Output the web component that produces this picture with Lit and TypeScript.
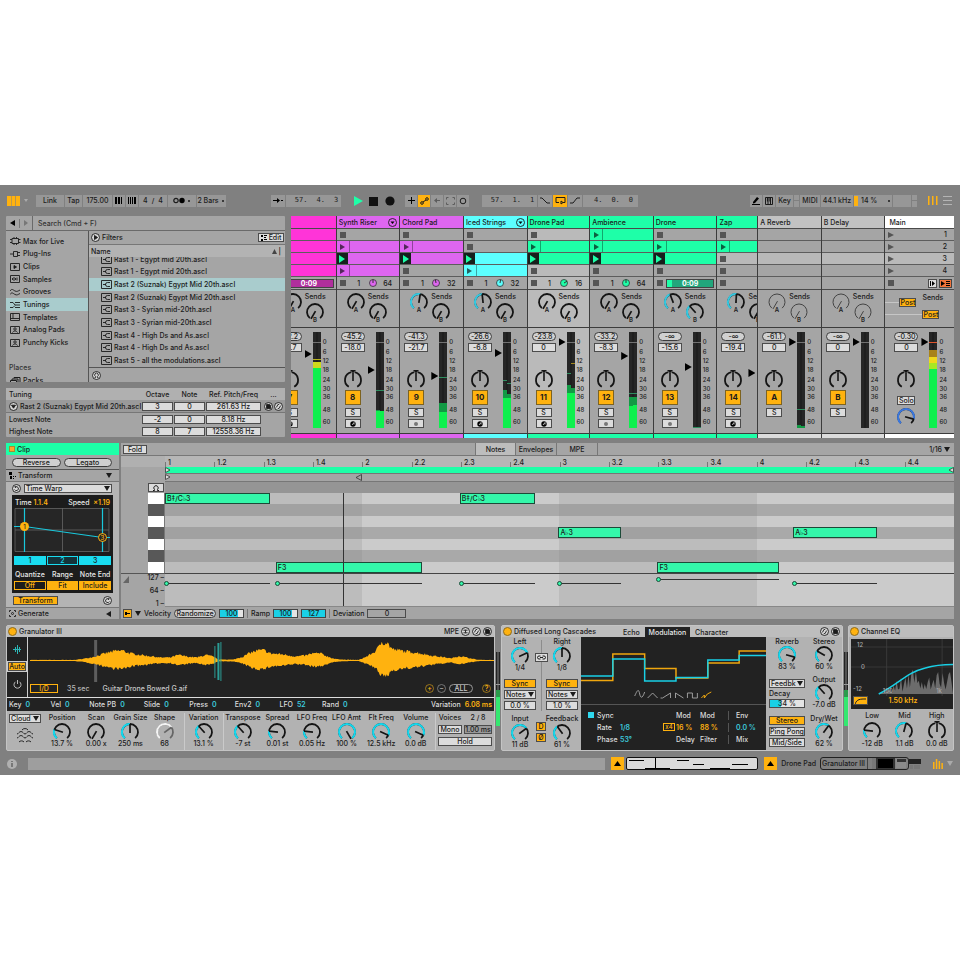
import { LitElement, html, svg, css, nothing } from "lit";
import { customElement } from "lit/decorators.js";
import { classMap } from "lit/directives/class-map.js";
import { styleMap } from "lit/directives/style-map.js";

/* ---------- shared styles ---------- */
const base = css`
  :host {
    --ink: #1b1b1b;
    --panel: #a5a5a5;
    --light: #b9b9b9;
    --desk: #808080;
    --line: #4e4e4e;
    --amber: #ffb20f;
    --cyan: #14d8ee;
    --mint: #1effa8;
    --field: #dcdcdc;
    display: block;
    min-width: 0;
    font: 500 7px/9px Inter, "Liberation Sans", sans-serif;
    color: var(--ink);
  }
  *, *::before { box-sizing: border-box; }
  svg { display: block; flex: none; }
  button, input, select {
    font: inherit;
    color: inherit;
    margin: 0;
    padding: 0;
    border: 0;
    border-radius: 0;
    background: none;
    appearance: none;
    min-width: 0;
    line-height: inherit;
  }
  button { display: flex; align-items: center; justify-content: center; white-space: nowrap; }
  ul, h2, p { margin: 0; padding: 0; list-style: none; font: inherit; }
  a { color: inherit; text-decoration: none; }
  .row { display: flex; align-items: center; }
  .grow { flex: 1; }
  .btn { height: 9px; border: 1px solid #4c4c4c; background: var(--field); }
  .pill { height: 9px; border: 1px solid #3c3c3c; border-radius: 5px; background: #d0d0d0; }
  .on { background: var(--amber); }
  .field { height: 9px; border: 1px solid #4c4c4c; background: var(--field); text-align: center; width: 100%; }
  .pick { display: flex; align-items: center; height: 9px; border: 1px solid #4c4c4c; background: var(--field); }
  .pick select { flex: 1; height: 7px; line-height: 7px; padding-left: 1px; }
  .pick svg { margin-right: 1px; }
  .knob { position: relative; display: flex; flex-direction: column; align-items: center; white-space: nowrap; }
  .knob input { position: absolute; inset: 0; width: 100%; height: 100%; opacity: 0; }
  .caption { line-height: 10px; }
`;

/* ---------- drawing helpers ---------- */
const polar = (c: number, r: number, deg: number) => {
  const a = (deg * Math.PI) / 180;
  return `${(c + r * Math.sin(a)).toFixed(2)} ${(c - r * Math.cos(a)).toFixed(2)}`;
};
const arc = (c: number, r: number, a: number, b: number) =>
  `M${polar(c, r, a)}A${r} ${r} 0 ${b - a > 180 ? 1 : 0} 1 ${polar(c, r, b)}`;

interface DialOpts { ring?: string; base?: string; thin?: boolean; pan?: boolean; letter?: string; rest?: string }

const dial = (value: number, o: DialOpts = {}) => {
  const angle = -150 + value * 300;
  const base = o.base ?? "#141414";
  const rest = o.rest ?? base;
  const w = o.thin ? 1 : 1.8;
  const edge = Math.max(-139, Math.min(139, angle));
  return html`<svg width="20" height="20" viewBox="0 0 20 20" fill="none">
    ${o.pan
      ? svg`<path d="${arc(10, 8, -148, -12)}${arc(10, 8, 12, 148)}" stroke=${base} stroke-width="1.8"/>
          <path d="M7 0h6l-3 3.2z" fill=${base}/><path d="M10 3v8" stroke=${base} stroke-width="1.6"/>`
      : svg`<path d=${arc(10, 8, -140, 140)} stroke=${rest} stroke-width=${w}/>
          ${o.ring && edge > -138 ? svg`<path d=${arc(10, 8, -140, edge)} stroke=${o.ring} stroke-width="2"/>` : nothing}
          <path d="M${polar(10, 1, angle + 180)}L${polar(10, 8, angle)}" stroke=${base} stroke-width=${o.thin ? 1 : 1.7}/>`}
    ${o.letter ? svg`<text x="10" y="19.6" text-anchor="middle" font-size="6" font-weight="600" fill="#1b1b1b">${o.letter}</text>` : nothing}
  </svg>`;
};

const knob = (label: string, value: number, text: string, o: DialOpts = {}) => html`
  <label class="knob">
    <span class="caption">${label}</span>
    <input type="range" min="0" max="100" .value=${String(value * 100)} aria-label=${label} />
    ${dial(value, { ring: "#14d8ee", ...o })}
    <span class="reading">${text}</span>
  </label>`;

const down = (fill = "#1b1b1b") => html`<svg width="6" height="5" viewBox="0 0 6 5"><path d="M0 0h6L3 5z" fill=${fill} /></svg>`;
const left = () => html`<svg width="5" height="6" viewBox="0 0 5 6"><path d="M5 0v6L0 3z" fill="#1b1b1b" /></svg>`;
const pick = (name: string, value: string) => html`
  <span class="pick"><select aria-label=${name}><option>${value}</option></select>${down()}</span>`;
const ringIcon = (inner: unknown, size = 9) => html`
  <svg width=${size} height=${size} viewBox="0 0 9 9" fill="none" stroke="#1b1b1b" stroke-width=".9">
    <circle cx="4.5" cy="4.5" r="4" fill="#d6d6d6" />${inner}</svg>`;
const swap = svg`<path d="M2.4 5.4L4 2.400h1.200M6.600 3.600L5 6.600H3.800"/>`;
const save = svg`<path d="M2.600 2.400h3l1 1v3.200h-4z" fill="#1b1b1b"/>`;
const gridDots = svg`<path d="M2.400 3.200h1.600M5 3.200h1.600M2.400 5.800h1.600M5 5.800h1.600M4.500 2.500v4" />`;

/* ---------- transport ---------- */
@customElement("live-transport")
export class LiveTransport extends LitElement {
  static styles = [base, css`
    .bar { display: flex; align-items: center; height: 31px; padding: 0 8px 0 7px; }
    .group { display: flex; gap: 1px; }
    .group > * { height: 12px; background: #979797; display: flex; align-items: center; justify-content: center; }
    .group > .lit { background: var(--amber); }
    .g1 { margin-left: 8px; }
    .g2 { margin-left: 45px; }
    .g3 { margin-left: 12px; gap: 6px; }
    .g3 > * { background: none; width: 10px; }
    .g4 { margin-left: 10px; }
    .g5 { margin-left: 13px; }
    .g6 { margin-left: auto; }
    .g7 { margin-left: 11px; gap: 5px; }
    .g7 > * { background: none; }
    .w5 { width: 5px; } .w12 { width: 12px; } .w14 { width: 14px; } .w17 { width: 17px; } .w18 { width: 18px; }
    .w20 { width: 20px; } .w28 { width: 28px; } .w29 { width: 29px; } .w32 { width: 32px; } .w38 { width: 38px; } .w55 { width: 55px; }
    .pos { gap: 9px; padding-left: 6px; font-family: "DejaVu Sans Mono", monospace; }
    .sig { gap: 4px; }
    .cpu { justify-content: flex-start; gap: 3px; }
    .cpu i:first-child { width: 4px; height: 10px; background: var(--amber); }
    .cpu span { flex: 1; text-align: left; }
    .split { flex-direction: column; gap: 1px; }
    .group > .split { background: none; }
    .split i { flex: 1; width: 100%; background: #979797; }
    .caret { margin-left: 4px; }
    .dot { width: 2px; height: 2px; border-radius: 1px; background: var(--ink); margin: 0 2px 0 3px; }
  `];

  private pos(name: string, a: string, b: string, c: string) {
    return html`<button class="w55 pos" aria-label=${name}><span>${a}.</span><span>${b}.</span><span>${c}</span></button>`;
  }

  render() {
    return html`<header class="bar">
      <svg width="13" height="10" viewBox="0 0 13 10"><path d="M0 0h4.500v10H0zM5 0h3.400v10H5zM9 0h4v10H9z" fill="#ffb20f" /></svg>
      <span class="caret"><svg width="4" height="3" viewBox="0 0 4 3"><path d="M0 0h4L2 3z" fill="#aaa" /></svg></span>
      <div class="group g1">
        <button class="w28">Link</button>
        <button class="w17">Tap</button>
        <button class="w29">175.00</button>
        <button class="w12" aria-label="Nudge down"><svg width="8" height="7"><path d="M0 0h2v7H0zM3 0h2v7H3zM6 0h1v7H6z" /></svg></button>
        <button class="w12" aria-label="Nudge up"><svg width="8" height="7"><path d="M0 0h1v7H0zM2 0h1v7H2zM4 0h1v7H4zM6 0h2v7H6z" /></svg></button>
        <button class="w28 sig"><span>4</span><span>/</span><span>4</span></button>
        <button class="w28" aria-label="Metronome"><svg width="12" height="7" viewBox="0 0 12 7"><circle cx="3" cy="3.5" r="2.2" fill="none" stroke="#1b1b1b" stroke-width="1.2" /><circle cx="9" cy="3.5" r="2.7" /></svg><i class="dot"></i></button>
        <button class="w29">2 Bars<i class="dot"></i></button>
      </div>
      <div class="group g2">
        <button class="w14" aria-label="Follow"><svg width="10" height="7" viewBox="0 0 10 7"><path d="M0 3h4V1l3 2.5L4 6V4H0zM8 3h2v1H8z" /></svg></button>
        ${this.pos("Position", "57", "4", "3")}
      </div>
      <div class="group g3">
        <button aria-label="Play"><svg width="10" height="10" viewBox="0 0 10 10"><path d="M1 0l9 5-9 5z" fill="#1effa8" /></svg></button>
        <button aria-label="Stop"><svg width="10" height="10"><path d="M0 1h9v9H0z" fill="#111" /></svg></button>
        <button aria-label="Record"><svg width="10" height="10"><circle cx="5" cy="5" r="4.6" fill="#111" /></svg></button>
      </div>
      <div class="group g4">
        <button class="w12" aria-label="Overdub"><svg width="7" height="7"><path d="M3 0h1v7H3zM0 3h7v1H0z" /></svg></button>
        <button class="w12 lit" aria-label="Automation arm"><svg width="9" height="8" viewBox="0 0 9 8" fill="none" stroke="#1b1b1b"><circle cx="2" cy="6" r="1.3" /><circle cx="7" cy="2" r="1.3" /><path d="M3 5l3-2" /></svg></button>
        <button class="w12" aria-label="Re-enable automation"><svg width="7" height="7" viewBox="0 0 7 7"><path d="M6 3H3V1L0 3.5 3 6V4h3z" fill="#5c5c5c" /></svg></button>
        <button class="w12" aria-label="Capture"><svg width="9" height="8" viewBox="0 0 9 8" fill="none" stroke="#5c5c5c"><path d="M.5 2.5v-2h2M6.500.5h2v2M8.500 5.500v2h-2M2.500 7.500h-2v-2" /></svg></button>
        <button class="w12" aria-label="Session record"><svg width="8" height="8"><circle cx="4" cy="4" r="2.8" fill="none" stroke="#1b1b1b" /></svg></button>
      </div>
      <div class="group g5">
        ${this.pos("Loop start", "57", "1", "1")}
        <button class="w14" aria-label="Punch in"><svg width="10" height="7" viewBox="0 0 10 7" fill="none" stroke="#1b1b1b"><path d="M0 1h2l5 5h3" /></svg></button>
        <button class="w14 lit" aria-label="Loop"><svg width="11" height="9" viewBox="0 0 11 9" fill="none" stroke="#1b1b1b"><path d="M4 6.500H1v-5h9v5H8M6 8l2-1.500L6 5z" /></svg></button>
        <button class="w14" aria-label="Punch out"><svg width="10" height="7" viewBox="0 0 10 7" fill="none" stroke="#1b1b1b"><path d="M0 6h3l4-5h3" /></svg></button>
        ${this.pos("Loop length", "4", "0", "0")}
      </div>
      <div class="group g6">
        <button class="w12" aria-label="Draw"><svg width="8" height="8" viewBox="0 0 8 8"><path d="M1 5l4-5 2 1.500-4 4.500L1 6.500zM0 7h8v1H0z" /></svg></button>
        <button class="w12" aria-label="Computer keyboard"><svg width="8" height="8" viewBox="0 0 8 8" fill="none" stroke="#1b1b1b"><path d="M.5.5h7v7h-7zM3 .5v7M5.500.5v7" /><path d="M2.500 1v3.500M5 1v3.500" stroke-width="1.200" /></svg></button>
        <button class="w17">Key</button>
        <span class="w5 split"><i></i><i></i></span>
        <button class="w20">MIDI</button>
        <button class="w32">44.1 kHz</button>
        <button class="w38 cpu"><i></i><span>14 %</span><i class="dot"></i></button>
        <span class="w18"></span>
        <span class="w5 split"><i></i><i></i></span>
      </div>
      <div class="group g7">
        <button aria-label="Arrangement view"><svg width="10" height="9"><path d="M0 0h1.500v9H0zM4 0h1.500v9H4zM8 0h1.500v9H8z" fill="#ffb20f" /></svg></button>
        <button aria-label="Menu"><svg width="9" height="9"><path d="M0 0h9v1H0zM0 4h9v1H0zM0 8h9v1H0z" fill="#b4b4b4" /></svg></button>
      </div>
    </header>`;
  }
}

/* ---------- browser ---------- */
const CATEGORIES: [string, unknown][] = [
  ["Max for Live", svg`<path d="M0 2.500h2M8.500 2.500h2M0 5.500h2M8.500 5.500h2M2 1.500h6.500v5H2zM4 1.500V0M6.500 1.500V0M4 8V6.500M6.500 8V6.500"/>`],
  ["Plug-Ins", svg`<path d="M0 4h3M3.500 1.500h4v5h-4zM7.500 2.500H10M7.500 5.500H10"/>`],
  ["Clips", svg`<path d="M.5.5h9v7h-9z"/><path d="M4 2.500v3L6.500 4z" fill="#1b1b1b"/>`],
  ["Samples", svg`<path d="M.5.5h9v7h-9zM2.500 3v2M4 2v4M5.500 3v2M7 2.500v3"/>`],
  ["Grooves", svg`<path d="M0 3c2-3 3-1 5 0s3 0 5-1M0 6.500c2-3 3-1 5 0s3 0 5-1"/>`],
  ["Tunings", svg`<path d="M0 1.500h3l2 2.500h5M5 1.500h5M0 6.500h3l2-2M5 6.500h5"/>`],
  ["Templates", svg`<path d="M.5.5h9v7h-9zM3 .5v5M.5 5.500h9"/>`],
  ["Analog Pads", svg`<path d="M.5.5h9v7h-9z"/><circle cx="5" cy="3" r="1.200"/><path d="M2.500 6.500c1-2 4-2 5 0"/>`],
  ["Punchy Kicks", svg`<path d="M.5.5h9v7h-9z"/><circle cx="5" cy="3" r="1.200"/><path d="M2.500 6.500c1-2 4-2 5 0"/>`],
];
const FILES = [
  "Rast 1 - Egypt mid 20th.ascl", "Rast 1 - Egypt mid 20th.ascl", "Rast 2 (Suznak) Egypt Mid 20th.ascl",
  "Rast 2 (Suznak) Egypt Mid 20th.ascl", "Rast 3 - Syrian mid-20th.ascl", "Rast 3 - Syrian mid-20th.ascl",
  "Rast 4 - High Ds and As.ascl", "Rast 4 - High Ds and As.ascl", "Rast 5 - all the modulations.ascl",
];

@customElement("live-browser")
export class LiveBrowser extends LitElement {
  static styles = [base, css`
    :host { display: flex; flex-direction: column; gap: 6px; }
    .card { background: var(--panel); border-radius: 1px; }
    .search { display: flex; height: 15px; border-bottom: 1px solid #6a6a6a; }
    .nav { display: flex; align-items: center; gap: 4px; width: 27px; padding-left: 4px; border-right: 1px solid #6a6a6a; }
    .nav i { width: 1px; height: 9px; background: #777; }
    .search input { flex: 1; padding-left: 5px; }
    .search input::placeholder { color: #333; opacity: 1; }
    .cols { display: grid; grid-template-columns: 83px minmax(0, 1fr); grid-template-rows: 151px; }
    .side { border-right: 1px solid #555; padding-top: 4px; overflow: hidden; }
    .side ul { display: grid; grid-auto-rows: 1fr; height: 114px; }
    .side a { display: flex; align-items: center; gap: 2px; padding-left: 4px; }
    .side ul a { height: 100%; }
    .chosen { background: #a9cccd; }
    .side h2 { margin-top: 14px; padding-left: 3px; color: #333; }
    .side .pack { margin-top: 4px; }
    .list { display: flex; flex-direction: column; }
    .filters { display: flex; align-items: center; gap: 2px; height: 14px; padding: 0 1px 0 2px; border-bottom: 1px solid #777; }
    .filters .btn { width: 26px; gap: 2px; }
    .name { display: flex; align-items: center; height: 12px; padding: 0 4px 0 2px; background: #b3b3b3; gap: 2px; }
    .files { flex: 1; min-height: 0; display: flex; flex-direction: column; justify-content: flex-end; overflow: hidden; }
    .files ul { display: grid; grid-auto-rows: 1fr; height: 114px; flex: none; }
    .files a { display: flex; align-items: center; gap: 2px; height: 100%; padding-left: 12px; white-space: nowrap; }
    .foot { height: 15px; flex: none; border-top: 1px solid #555; display: flex; align-items: center; padding-left: 3px; }
    .tuning { display: grid; grid-template-columns: minmax(0, 1fr) 31px 31px 55px 23px; column-gap: 1px; align-items: center; height: 49px; grid-template-rows: 12px 13px 12px 12px; }
    .tuning > * { z-index: 1; }
    .tuning .band { grid-column: 1 / -1; grid-row: 1; align-self: stretch; background: #b0b0b0; z-index: 0; }
    .tuning .rule { grid-column: 1 / -1; grid-row: 2; align-self: stretch; background: #9a9a9a; border-bottom: 1px solid #777; z-index: 0; }
    .lab { padding-left: 3px; display: flex; align-items: center; gap: 2px; white-space: nowrap; }
    .c { text-align: center; white-space: nowrap; }
    .tools { display: flex; gap: 1px; padding-left: 2px; }
  `];

  private line(row: number, label: unknown, name: string, vals: string[]) {
    return html`<span class="lab" style=${styleMap({ gridRow: row, gridColumn: 1 })}>${label}</span>
      ${vals.map((v, i) => html`<input class="field" style=${styleMap({ gridRow: row, gridColumn: i + 2 })} .value=${v} aria-label="${name} ${i + 1}" />`)}`;
  }

  render() {
    const stroke = "#1b1b1b";
    return html`
      <section class="card">
        <div class="search">
          <div class="nav">
            <svg width="5" height="6" viewBox="0 0 5 6"><path d="M5 0v6L0 3z" /></svg><i></i>
            <svg width="4" height="6" viewBox="0 0 4 6"><path d="M0 0v6l4-3z" fill="#777" /></svg>
          </div>
          <input type="text" placeholder="Search (Cmd + F)" aria-label="Search" />
        </div>
        <div class="cols">
          <nav class="side">
            <ul>${CATEGORIES.map(([n, icon]) => html`<li class=${n === "Tunings" ? "chosen" : ""}><a href="#">
              <svg width="11" height="8" viewBox="0 0 11 8" fill="none" stroke=${stroke} stroke-width=".9">${icon}</svg>${n}</a></li>`)}</ul>
            <h2>Places</h2>
            <a class="pack" href="#"><svg width="11" height="8" viewBox="0 0 11 8" fill="none" stroke=${stroke}><path d="M.5 3.500h6v4h-6zM2 3V2h6v5M4 1.500V.5h6v5" /></svg>Packs</a>
          </nav>
          <div class="list">
            <div class="filters">${ringIcon(svg`<path d="M3.500 2.500v4l3-2z" fill="#1b1b1b"/>`)}<span class="grow">Filters</span>
              <button class="btn"><svg width="6" height="6"><path d="M0 0h2v2H0zM3 0h3v1H3zM0 4h2v2H0zM3 4h3v1H3zM3 2h2v1H3z" /></svg>Edit</button></div>
            <div class="name"><span class="grow">Name</span><svg width="5" height="5"><path d="M0 5h5L2.500 0z" fill="#444" /></svg><span>|</span></div>
            <div class="files"><ul>${FILES.map((f, i) => html`<li class=${i === 2 ? "chosen" : ""}><a href="#">
              <svg width="11" height="9" viewBox="0 0 11 9" fill="none" stroke=${stroke} stroke-width=".9"><path d="M.5.5h10v8H.5zM2 4.500h3M9 2.500H6.500a2 2 0 0 0 0 4H9" /></svg>${f}</a></li>`)}</ul></div>
            <div class="foot">${ringIcon(svg`<path d="M2.600 6.500h1V5.500a1.800 1.800 0 1 1 1.800 0v1h1"/>`)}</div>
          </div>
        </div>
      </section>
      <section class="card tuning">
        <span class="band"></span><span class="rule"></span>
        <span class="lab" style=${styleMap({ gridRow: 1, gridColumn: 1 })}>Tuning</span>
        ${["Octave", "Note", "Ref. Pitch/Freq", "..."].map((t, i) => html`<span class="c" style=${styleMap({ gridRow: 1, gridColumn: i + 2 })}>${t}</span>`)}
        ${this.line(2, html`${ringIcon(svg`<path d="M2.500 3.200h4l-2 3z" fill="#1b1b1b"/>`)}Rast 2 (Suznak) Egypt Mid 20th.ascl`, "Reference", ["3", "0", "261.63 Hz"])}
        <span class="tools" style=${styleMap({ gridRow: 2, gridColumn: 5 })}>${ringIcon(save)}${ringIcon(swap)}</span>
        ${this.line(3, "Lowest Note", "Lowest note", ["-2", "0", "8.18 Hz"])}
        ${this.line(4, "Highest Note", "Highest note", ["8", "7", "12558.36 Hz"])}
      </section>`;
  }
}

/* ---------- session ---------- */
type Slot = "fill" | "stop" | "clip" | "play" | "none";
type Seg = [number, number, string, number?];
interface Track {
  name: string; color: string; slots: Slot[]; menu?: boolean; selected?: boolean; edge?: "start" | "end";
  loop?: [string, string, number]; progress?: number; stop?: boolean;
  sends: [number, number, boolean, boolean]; faint?: boolean;
  peak: string; vol: string; fader: number; id: string; arm?: "note" | "audio"; meter: Seg[];
}
const PURPLE = "#de66f0", MINT = "#1effa8", AQUA = "#5cffff", GREEN = "#0ef04e", DEEP = "#129a44";
const TRACKS: Track[] = [
  { name: "", color: "#ff34d8", slots: ["fill", "fill", "fill", "fill"], edge: "start", progress: 0, sends: [0, 0, false, false], peak: "-12.2", vol: "-3.7", fader: 22, id: "7", arm: "note",
    meter: [[27, 1, "#b7b21c"], [30, 6, "#cfd91c"], [36, 60, GREEN]] },
  { name: "Synth Riser", color: PURPLE, menu: true, slots: ["stop", "clip", "play", "clip"], loop: ["1", "64", 0], stop: true, sends: [0, 0, false, false], peak: "-45.2", vol: "-18.0", fader: 38, id: "8", arm: "note",
    meter: [[58, 1, "#2f8f60"], [78, 3, DEEP, 1], [79, 17, GREEN]] },
  { name: "Chord Pad", color: PURPLE, slots: ["stop", "clip", "play", "stop"], loop: ["1", "32", 350], stop: true, sends: [0.53, 0, true, false], peak: "-41.3", vol: "-21.7", fader: 44, id: "9", arm: "audio",
    meter: [[45, 1, "#2f8f60"], [71, 9, DEEP], [80, 16, GREEN]] },
  { name: "Iced Strings", color: AQUA, menu: true, slots: ["stop", "stop", "play", "clip"], loop: ["1", "32", 10], stop: true, sends: [0.48, 0, true, false], peak: "-26.6", vol: "-6.8", fader: 21, id: "10", arm: "note",
    meter: [[48, 1, "#2f8f60", 1], [51, 1, "#2f8f60", 2], [58, 8, DEEP, 1], [62, 4, DEEP, 2], [66, 30, GREEN]] },
  { name: "Drone Pad", color: MINT, selected: true, slots: ["stop", "clip", "play", "stop"], loop: ["1", "16", 60], stop: true, sends: [0, 0, false, false], peak: "-23.8", vol: "0", fader: 10, id: "11", arm: "note",
    meter: [[31, 1, "#a3861c", 2], [41, 1, "#2f8f60", 1], [53, 8, DEEP, 1], [56, 5, DEEP, 2], [61, 35, GREEN]] },
  { name: "Ambience", color: MINT, slots: ["clip", "clip", "play", "stop"], loop: ["1", "64", 0], stop: true, sends: [0, 0, false, false], peak: "-33.2", vol: "-8.3", fader: 24, id: "12", arm: "audio",
    meter: [[61, 1, "#2f8f60"], [65, 9, DEEP], [74, 22, GREEN, 1], [73, 23, GREEN, 2]] },
  { name: "Drone", color: MINT, slots: ["stop", "clip", "play", "stop"], progress: 0.1, stop: true, sends: [0.43, 0.36, true, true], peak: "-∞", vol: "-15.6", fader: 35, id: "13", arm: "audio", meter: [[95, 1, "#2f8f60"]] },
  { name: "Zap", color: MINT, slots: ["stop", "clip", "stop", "stop"], edge: "end", stop: true, sends: [0.51, 0, true, false], peak: "-∞", vol: "-19.4", fader: 41, id: "14", arm: "note", meter: [] },
  { name: "A Reverb", color: "#c2c2c2", slots: ["none", "none", "none", "none"], sends: [0, 0, false, false], faint: true, peak: "-61.1", vol: "0", fader: 10, id: "A", meter: [[77, 1, "#2f8f60"], [93, 3, DEEP, 1], [94, 2, DEEP, 2]] },
  { name: "B Delay", color: "#c2c2c2", slots: ["none", "none", "none", "none"], sends: [0, 0, false, false], faint: true, peak: "-∞", vol: "0", fader: 10, id: "B", meter: [] },
];

@customElement("live-session")
export class LiveSession extends LitElement {
  static styles = [base, css`
    .grid { display: grid; height: 222px; background: #3c3c3c; column-gap: 1px;
      grid-template-columns: minmax(0, 45fr) minmax(0, 63fr) minmax(0, 63fr) minmax(0, 63fr) minmax(0, 62fr) minmax(0, 63fr) minmax(0, 63fr) minmax(0, 40fr) minmax(0, 63fr) minmax(0, 63fr) minmax(0, 69fr); }
    .track { display: flex; flex-direction: column; overflow: hidden; background: var(--panel); }
    .track > * { width: 100%; }
    .sends, .mix { min-width: 62px; }
    .start { align-items: flex-end; }
    .current { background: #bababa; }
    .head { height: 13px; display: flex; align-items: center; padding: 0 2px; border-bottom: 1px solid #4a4a4a; white-space: nowrap; }
    .slot { height: 12px; display: flex; align-items: stretch; border-bottom: 1px solid #5d5d5d; }
    .slot button { width: 12px; }
    .slot .sep { width: 1px; background: rgba(0, 0, 0, 0.35); }
    .live button { background: #16201c; width: 11px; }
    .scene { background: #b9b9b9; }
    .status { height: 13px; display: flex; align-items: center; border-bottom: 1px solid #4a4a4a; padding: 0 2px 0 3px; }
    .status span { width: 14px; text-align: center; }
    .status .n1 { margin: 0 3px 0 6px; }
    .status .n2 { margin-left: 4px; }
    .time { flex: 1; height: 9px; border: 1px solid #444; margin-left: 3px; color: #fff; text-align: center; line-height: 7px; font-weight: 700; }
    .start .status { padding-left: 0; }
    .start .time { margin-left: 0; border-left: 0; padding-right: 6px; }
    .sends { height: 38px; border-bottom: 1px solid #3c3c3c; display: grid; grid-template-columns: 9px 20px 2px 1fr; padding-top: 2px; }
    .sends .b { grid-column: 4; grid-row: 1; }
    .sends .a { grid-column: 2; grid-row: 1; }
    .sends svg { overflow: visible; }
    .sends .b p { line-height: 10px; }
    .mix { height: 105px; display: flex; padding-top: 4px; }
    .strip { width: 24px; margin-left: 4px; display: flex; flex-direction: column; align-items: center; flex: none; }
    .strip .pill, .strip .field { width: 24px; height: 9px; }
    .strip .field { margin-top: 2px; }
    .strip .pan { margin-top: 18px; height: 20px; }
    .num { width: 16px; height: 15px; border: 1px solid #7d6320; background: var(--amber); font-weight: 700; font-size: 8px; line-height: 13px; }
    .strip .btn { width: 16px; margin-top: 3px; }
    .strip .btn + .btn { margin-top: 2px; }
    .strip .solo { margin-top: 6px; width: 18px; }
    .cue { margin-top: 2px; }
    .fader { writing-mode: vertical-lr; direction: rtl; width: 7px; height: 97px; margin-left: 3px; background: none; flex: none; }
    .fader::-webkit-slider-thumb { appearance: none; width: 7px; height: 8px; background: #000; clip-path: polygon(0 0, 100% 50%, 0 100%); }
    .scale { margin-left: 1px; padding-top: 5px; display: grid; align-content: start; grid-template-rows: 10px 9px 9px 10px 9px 9px 8px 18px 6px; align-items: center; font-size: 6px; line-height: 6px; }
    .color { flex: 1; border-top: 1px solid #3c3c3c; }
    .main .head { background: #fff; padding-left: 4px; }
    .main .slot { align-items: center; padding: 0 7px 0 3px; justify-content: space-between; }
    .main .slot button { width: 6px; }
    .main .status { gap: 2px; }
    .main .status .btn { width: 9px; height: 9px; }
    .main .status .back { width: 13px; height: 9px; border: 1px solid #444; background: #f0743a; }
    .main .mix { padding-left: 5px; }
    .posts { height: 38px; border-bottom: 1px solid #3c3c3c; display: grid; grid-template-columns: 14px 17px 6px 17px 1fr; grid-template-rows: 8px 9px 3px 9px; }
    .posts .btn { background: var(--amber); }
    .posts p { grid-column: 4 / 6; grid-row: 1 / 3; line-height: 9px; padding-top: 3px; }
    .posts .p1 { grid-column: 2; grid-row: 2; }
    .posts .p2 { grid-column: 4; grid-row: 4; }
    .posts i { height: 1px; background: #c6c6c6; align-self: center; }
    .posts .l1 { grid-column: 1; grid-row: 2; }
    .posts .l2 { grid-column: 1 / 4; grid-row: 4; }
  `];

  private meter(segs: Seg[]) {
    return html`<svg width="10" height="96" viewBox="0 0 10 96">
      <path d="M1 0h8v96H1z" fill="#262626" /><path d="M4.700 0h.6v96h-.6z" fill="#111" /><path d="M1 10h8v.8H1z" fill="#888" />
      ${segs.map(([y, h, c, ch]) => svg`<rect x=${ch === 2 ? 5 : 1} y=${y} width=${ch ? 4 : 8} height=${h} fill=${c}/>`)}
    </svg>`;
  }

  private mixer(t: { peak: string; vol: string; fader: number; id: string; arm?: string; edge?: string; meter: Seg[] }, name: string) {
    const main = t.id === "Main";
    return html`<div class="mix">
      <div class="strip">
        <button class="pill">${t.peak}</button>
        <input class="field" .value=${t.vol} aria-label="${name} volume" />
        <div class="pan">${dial(0.5, { pan: true })}</div>
        ${main
          ? html`<button class="btn solo">Solo</button><div class="cue">${dial(0.85, { ring: "#3a78e0" })}</div>`
          : html`<button class="num">${t.id}</button><button class="btn">S</button>
            ${t.arm ? html`<button class="btn" aria-label="Arm ${name}">${t.arm === "note"
              ? html`<svg width="6" height="6" viewBox="0 0 6 6"><circle cx="3" cy="3" r="2.700" /><path d="M2 4l2-2.500v2" stroke="#ddd" stroke-width=".8" fill="none" /></svg>`
              : html`<svg width="6" height="6"><circle cx="3" cy="3" r="2" fill="#777" /></svg>`}</button>` : nothing}`}
      </div>
      <input class="fader" type="range" min="0" max="89" .value=${String(93 - t.fader)} aria-label="${name} fader" />
      ${t.edge === "end" ? nothing : html`${this.meter(t.meter)}
      <div class="scale">${[0, 6, 12, 18, 24, 30, 36, 48, 60].map((n) => html`<span>${n}</span>`)}</div>`}
    </div>`;
  }

  private track(t: Track) {
    const dark = "rgba(0,0,0,.62)";
    return html`<section class=${classMap({ track: true, start: t.edge === "start", current: !!t.selected })}>
      <div class="head" style=${styleMap({ background: t.color })}><span class="grow">${t.name}</span>
        ${t.menu ? html`<svg width="9" height="9" viewBox="0 0 9 9"><circle cx="4.500" cy="4.500" r="4" fill="none" stroke="#1b1b1b" stroke-width=".9" /><path d="M2.500 3.500h4L4.500 6z" /></svg>` : nothing}</div>
      ${t.slots.map((s, i) => html`<div class=${classMap({ slot: true, live: s === "play", scene: i === 2 && (s === "none" || s === "stop") })}
          style=${styleMap(s === "clip" || s === "play" || s === "fill" ? { background: t.color } : {})}>
        ${s === "stop" ? html`<button aria-label="Stop"><svg width="6" height="6"><path d="M0 0h6v6H0z" fill="#555" /></svg></button>` : nothing}
        ${s === "clip" ? html`<button aria-label="Launch"><svg width="5" height="6"><path d="M0 0l5 3-5 3z" fill=${dark} /></svg></button><i class="sep"></i>` : nothing}
        ${s === "play" ? html`<button aria-label="Launch"><svg width="6" height="8"><path d="M0 0l6 4-6 4z" fill="#1effa8" /></svg></button>` : nothing}
      </div>`)}
      <div class="status">
        ${t.stop ? html`<svg width="6" height="6"><path d="M0 0h6v6H0z" fill="#555" /></svg>` : nothing}
        ${t.loop ? html`<span class="n1">${t.loop[0]}</span><svg width="8" height="8" viewBox="0 0 8 8"><circle cx="4" cy="4" r="3.500" fill=${t.color} stroke="#333" stroke-width=".8" /><path d="M4 4L${polar(4, 3.5, t.loop[2])}" stroke="#333" /></svg><span class="n2">${t.loop[1]}</span>` : nothing}
        ${t.progress !== undefined ? html`<div class="time" style=${styleMap({ background: t.edge ? "#b02f9c" : `linear-gradient(90deg, ${MINT} ${t.progress * 100}%, #22a67c 0)` })}>0:09</div>` : nothing}
      </div>
      <div class="sends">
        <div class="a">${dial(t.sends[0], { letter: "A", thin: t.faint, ring: t.sends[2] ? "#35c8e0" : undefined, base: t.faint ? "#444" : undefined })}</div>
        <div class="b"><p>Sends</p>${dial(t.sends[1], { letter: "B", thin: t.faint, ring: t.sends[3] ? "#35c8e0" : undefined, base: t.faint ? "#444" : undefined })}</div>
      </div>
      ${this.mixer(t, t.name || "Track 7")}
      <div class="color" style=${styleMap({ background: t.color.startsWith("#c2") ? "#dcdcdc" : t.color })}></div>
    </section>`;
  }

  render() {
    return html`<div class="grid">
      ${TRACKS.map((t) => this.track(t))}
      <section class="track main">
        <div class="head">Main</div>
        ${[1, 2, 3, 4].map((n) => html`<div class=${classMap({ slot: true, scene: n === 3 })}><button aria-label="Launch scene ${n}"><svg width="6" height="6"><path d="M0 0l6 3-6 3z" fill="#555" /></svg></button><span>${n}</span></div>`)}
        <div class="status"><svg width="6" height="6"><path d="M0 0h6v6H0z" fill="#555" /></svg><i class="grow"></i>
          <button class="btn" aria-label="Follow"><svg width="5" height="5"><path d="M0 0h1v5H0zM2 0l3 2.500L2 5z" /></svg></button>
          <button class="back" aria-label="Back to arrangement"><svg width="9" height="5"><path d="M0 0l4 2.500L0 5zM5 0h4v1H5zM5 2h4v1H5zM5 4h4v1H5z" /></svg></button></div>
        <div class="posts"><i class="l1"></i><button class="btn p1">Post</button><p>Sends</p><i class="l2"></i><button class="btn p2">Post</button></div>
        ${this.mixer({ peak: "-0.30", vol: "0", fader: 10, id: "Main", meter: [[10, 1, "#e0552c"], [18, 7, "#a8821a"], [25, 6, "#f0d81c"], [31, 6, "#a8e824"], [37, 59, GREEN]] }, "Main")}
        <div class="color" style=${styleMap({ background: "#fff" })}></div>
      </section>
    </div>`;
  }
}

/* ---------- clip editor ---------- */
interface Note { label: string; from: number; to: number; row: number; vel: number }
const ROLL = 790;
const NOTES: Note[] = [
  { label: "B‡/C♭3", from: 0, to: 105, row: 0, vel: 9 },
  { label: "F3", from: 111, to: 257, row: 6, vel: 9 },
  { label: "B‡/C♭3", from: 295, to: 370, row: 0, vel: 9 },
  { label: "A♭3", from: 394, to: 457, row: 3, vel: 9 },
  { label: "F3", from: 493, to: 615, row: 6, vel: 5 },
  { label: "A♭3", from: 629, to: 713, row: 3, vel: 9 },
];
const pct = (n: number) => `${((n / ROLL) * 100).toFixed(3)}%`;

@customElement("live-clip")
export class LiveClip extends LitElement {
  static styles = [base, css`
    :host { display: grid; grid-template-columns: 113px minmax(0, 1fr); gap: 2px; }
    .panel { background: #b4b4b4; display: flex; flex-direction: column; height: 176px; }
    .title { height: 12px; background: var(--mint); display: flex; align-items: center; gap: 2px; padding-left: 3px; }
    .title i { width: 6px; height: 6px; background: #ffa62b; outline: 1px solid #a98a30; outline-offset: -1px; }
    .two { display: flex; gap: 3px; padding: 3px 7px 3px 6px; height: 15px; background: var(--panel); border-bottom: 1px solid #555; }
    .two .pill { flex: 1; }
    .sect { height: 12px; display: flex; align-items: center; gap: 2px; padding: 0 7px 0 3px; background: var(--panel); border-bottom: 1px solid #777; }
    .tool { display: flex; align-items: center; gap: 3px; padding: 2px 7px 2px 6px; }
    .tool .pick { flex: 1; }
    .warp { margin: 0 6px; background: #1c1c1c; color: #e8e8e8; padding: 3px 2px; height: 98px; display: flex; flex-direction: column; }
    .warp b { color: var(--amber); font-weight: 600; }
    .info { display: flex; justify-content: space-between; padding: 0 1px; height: 11px; }
    .warp svg { width: 100%; height: 44px; flex: none; }
    .tri { display: grid; grid-template-columns: repeat(3, 1fr); gap: 1px; text-align: center; }
    .tri button { height: 9px; color: #1b1b1b; }
    .cy button { background: #19dcf0; }
    .cy { margin-top: 4px; }
    .cy .hollow { background: #14333a; border: 1px solid #19dcf0; color: #19dcf0; }
    .am { margin-top: 2px; }
    .am button { background: var(--amber); }
    .am .hollow { background: #1c1c1c; border: 1px solid var(--amber); color: var(--amber); }
    .lbl { margin-top: 5px; white-space: nowrap; }
    .lbl span { display: flex; justify-content: center; }
    .apply { display: flex; justify-content: space-between; align-items: center; padding: 0 7px; height: 15px; border-bottom: 1px solid #777; }
    .apply .btn { width: 45px; }
    .apply .on { background: var(--amber); }
    .gen { height: 11px; display: flex; align-items: center; gap: 2px; padding: 0 8px 0 3px; background: var(--panel); }

    .editor { background: var(--panel); height: 176px; display: grid; grid-template-columns: 27px 17px minmax(0, 1fr); grid-template-rows: 13px 11px 7px 8px 11px 81px 33px 12px; }
    .tabs { grid-column: 1 / -1; display: grid; grid-template-columns: 354px auto 1fr; align-items: center; border-bottom: 1px solid #777; }
    .tabs > .btn { width: 24px; margin-left: 2px; }
    .tabset { display: flex; height: 12px; }
    .tabset button { width: 41px; border-right: 1px solid #777; border-left: 0; }
    .tabset .cur { background: #bdbdbd; border-left: 1px solid #777; }
    .quant { justify-self: end; display: flex; gap: 2px; align-items: center; padding-right: 4px; }
    .ruler { grid-column: 3; display: grid; grid-template-columns: repeat(16, minmax(0, 1fr)); background: #b6b6b6; align-items: end; }
    .ruler span { border-left: 1px solid #777; padding-left: 2px; height: 5px; line-height: 2px; }
    .ruler-pad { grid-column: 1 / 3; background: #b0b0b0; }
    .side { grid-column: 1 / 3; }
    .loop { grid-column: 3; background: var(--mint); border-bottom: 1px solid #777; display: flex; justify-content: space-between; }
    .marks { grid-column: 3; border-bottom: 1px solid #777; display: flex; background: var(--panel); }
    .marks svg:last-child { margin-left: calc(25% - 13px); }
    .phones { grid-column: 2; display: flex; align-items: center; }
    .phones .btn { width: 16px; }
    .dim { grid-column: 3; background: #959595; }
    .keys { grid-column: 2; display: grid; grid-template-rows: repeat(7, 1fr); border-bottom: 1px solid #555; }
    .keys i { background: #fff; border-right: 1px solid #777; }
    .keys i:nth-child(even) { background: #585858; }
    .guard { grid-column: 1; border-bottom: 1px solid #555; }
    .roll { grid-column: 3; position: relative; display: grid; grid-template-rows: repeat(7, 1fr); background: linear-gradient(90deg, #bcbcbc 25%, #cbcbcb 0 50%, #bcbcbc 0 75%, #cbcbcb 0); border-bottom: 1px solid #444; }
    .roll > i:nth-child(even) { background: linear-gradient(90deg, #a1a1a1 25%, #a9a9a9 0 50%, #a1a1a1 0 75%, #a9a9a9 0); }
    .note { position: absolute; height: 11px; border: 1px solid #1c4a38; background: #34f7aa; justify-content: flex-start; padding-left: 1px; font-size: 7px; }
    .playhead { position: absolute; top: 0; bottom: 0; width: 1px; background: #333; }
    .vlab { grid-column: 1 / 3; display: flex; }
    .vlab svg { margin: 2px; }
    .vlab div { flex: 1; display: flex; flex-direction: column; justify-content: space-between; text-align: right; padding-right: 1px; line-height: 7px; }
    .vel { grid-column: 3; position: relative; background: linear-gradient(90deg, #bcbcbc 25%, #cbcbcb 0 50%, #bcbcbc 0 75%, #cbcbcb 0); border-bottom: 1px solid #888; }
    .stem { position: absolute; height: 1px; background: #333; }
    .stem::before { content: ""; position: absolute; left: -1px; top: -2px; width: 5px; height: 5px; border-radius: 3px; border: 1px solid #1c4a38; background: #34f7aa; }
    .tools { grid-column: 1 / -1; display: flex; align-items: center; padding-left: 2px; gap: 3px; white-space: nowrap; }
    .tools .on { width: 9px; background: var(--amber); }
    .tools .slide { width: 25px; height: 9px; border: 1px solid #444; text-align: center; }
    .s80 { background: linear-gradient(90deg, #19d0e6 80%, #e4e4e4 0); }
    .s100 { background: #19d0e6; }
    .tools .pill { width: 42px; }
    .tools .flat { width: 39px; background: var(--panel); }
    .tools .bar { width: 1px; height: 9px; background: #777; }
  `];

  render() {
    const beats = Array.from({ length: 16 }, (_, i) => `${Math.floor(i / 4) + 1}${i % 4 ? `.${(i % 4) + 1}` : ""}`);
    const flag = svg`<path d="M.5.5l4.500 2.500L.5 5.500z" fill="#ddd" stroke="#333" stroke-width=".8"/>`;
    return html`
      <section class="panel">
        <div class="title"><i></i>Clip</div>
        <div class="two"><button class="pill">Reverse</button><button class="pill">Legato</button></div>
        <div class="sect"><svg width="7" height="7"><path d="M0 0h3v3H0zM1 4h2v3H1zM4 4h1v1H4zM6 4h1v1H6zM4 6h1v1H4z" /></svg><span class="grow">Transform</span>${down()}</div>
        <div class="tool">${ringIcon(svg`<path d="M2.600 5.500a2 2 0 1 0 .4-2.300M3 2v1.300h1.300"/>`)}${pick("Transformation", "Time Warp")}</div>
        <div class="warp">
          <div class="info"><span>Time <b>1.1.4</b></span><span>Speed &nbsp;<b>×1.19</b></span></div>
          <svg viewBox="0 0 97 44" preserveAspectRatio="none">
            <path d="M1 .5h94v43H1z" fill="#262626" stroke="#666" stroke-width=".8" /><path d="M48.500 0v44M1 22h94" stroke="#666" stroke-width=".8" />
            <path d="M10.500 0v44M88.500 0v44M0 18.500h10.500l78 11H96" fill="none" stroke="#19c8dc" stroke-width="1.200" />
            <circle cx="10.500" cy="18.500" r="4.500" fill="#ffb20f" /><circle cx="88.500" cy="29.500" r="4" fill="#262626" stroke="#ffb20f" />
            <text x="10.500" y="20.700" font-size="6" text-anchor="middle" fill="#1b1b1b">1</text><text x="88.500" y="31.700" font-size="6" text-anchor="middle" fill="#ffb20f">3</text>
          </svg>
          <div class="tri cy"><button>1</button><button class="hollow">2</button><button>3</button></div>
          <div class="tri lbl"><span>Quantize</span><span>Range</span><span>Note End</span></div>
          <div class="tri am"><button class="hollow">Off</button><button>Fit</button><button>Include</button></div>
        </div>
        <div class="apply"><button class="btn on">Transform</button>${ringIcon(svg`<path d="M6.400 5.500a2 2 0 1 1-.4-2.300M6 2v1.300H4.700"/>`)}</div>
        <div class="gen"><svg width="7" height="7" viewBox="0 0 7 7" fill="none" stroke="#1b1b1b" stroke-width=".9"><path d="M.5 2V.5H2M5 .5h1.500V2M6.500 5v1.500H5M2 6.500H.5V5" /><circle cx="3.500" cy="3.500" r="1" /></svg><span class="grow">Generate</span>${left()}</div>
      </section>
      <section class="editor">
        <div class="tabs"><button class="btn">Fold</button>
          <div class="tabset"><button class="cur">Notes</button><button>Envelopes</button><button>MPE</button></div>
          <span class="quant">1/16 ${down()}</span></div>
        <div class="ruler-pad"></div>
        <div class="ruler">${beats.map((b) => html`<span>${b}</span>`)}</div>
        <div class="side"></div>
        <div class="loop"><svg width="6" height="6">${flag}</svg><svg width="6" height="6"><path d="M5.500.5L1 3l4.500 2.500z" fill="#ddd" stroke="#333" stroke-width=".8" /></svg></div>
        <div class="side"></div>
        <div class="marks"><svg width="6" height="6">${flag}</svg><svg width="7" height="7"><path d="M6.500.5L1 3.500l5.500 3z" fill="none" stroke="#333" stroke-width=".8" /></svg></div>
        <div></div>
        <div class="phones"><button class="btn" aria-label="Preview"><svg width="8" height="6" viewBox="0 0 8 6" fill="none" stroke="#1b1b1b"><path d="M1 5.500h1.500V4.500a2.200 2.200 0 1 1 3 0v1H7" /></svg></button></div>
        <div class="dim"></div>
        <div class="guard"></div>
        <div class="keys">${beats.slice(0, 7).map(() => html`<i></i>`)}</div>
        <div class="roll">${beats.slice(0, 7).map(() => html`<i></i>`)}
          ${NOTES.map((n) => html`<button class="note" style=${styleMap({ left: pct(n.from), width: pct(n.to - n.from), top: `${(n.row * 100) / 7}%` })}>${n.label}</button>`)}
          <div class="playhead" style=${styleMap({ left: pct(178) })}></div></div>
        <div class="vlab"><svg width="6" height="7"><path d="M6 0v7H0z" fill="#666" /></svg><div><span>127 –</span><span>64 –</span><span>1 –</span></div></div>
        <div class="vel">${NOTES.map((n) => html`<i class="stem" style=${styleMap({ left: pct(n.from), width: pct(n.to - n.from), top: `${n.vel}px` })}></i>`)}
          <div class="playhead" style=${styleMap({ left: pct(178) })}></div></div>
        <div class="tools">
          <button class="btn on" aria-label="Velocity lane"><svg width="5" height="3"><path d="M0 1h5v1H0zM0 0h2v3H0z" /></svg></button>${down()}
          <span>Velocity</span><button class="pill">Randomize</button>
          <input class="slide s80" value="100" aria-label="Velocity amount" /><i class="bar"></i>
          <span>Ramp</span><input class="slide s80" value="100" aria-label="Ramp start" /><input class="slide s100" value="127" aria-label="Ramp end" /><i class="bar"></i>
          <span>Deviation</span><input class="field flat" value="0" aria-label="Deviation" />
        </div>
      </section>`;
  }
}

/* ---------- devices ---------- */
const ENV: [number, number][] = [[30, .6], [75, .6], [85, 2], [95, 4], [105, 7], [113, 9], [122, 10], [130, 7], [145, 5], [160, 3], [170, 3], [178, 5.500], [190, 3.500], [197, 3], [205, 5.500], [212, 4], [218, 1], [233, 1], [243, 4], [250, 8], [258, 10], [264, 10], [270, 7], [283, 6], [295, 4], [305, 5], [312, 7], [320, 7], [327, 4], [334, 1.500], [345, .8], [358, .6], [366, 4], [373, 8], [378, 13], [381, 19], [386, 18], [392, 11], [405, 9], [415, 8], [430, 5], [445, 3], [450, 2], [458, 4.500], [466, 3], [475, 1], [480, .6], [493, .6]];
const wave = () => {
  const top: string[] = [], bottom: string[] = [];
  let seed = 7;
  const rnd = () => (seed = (seed * 16807) % 2147483647) / 2147483647;
  for (let x = 30; x <= 493; x += 1) {
    const k = ENV.findIndex(([ex]) => ex >= x);
    const [x1, y1] = ENV[k], [x0, y0] = ENV[Math.max(0, k - 1)];
    const a = x1 === x0 ? y1 : y0 + ((y1 - y0) * (x - x0)) / (x1 - x0);
    top.push(`${x - 30} ${(22.500 - a * (0.8 + rnd() * 0.4)).toFixed(1)}`);
    bottom.unshift(`${x - 30} ${(22.500 + a * 0.85 * (0.8 + rnd() * 0.4)).toFixed(1)}`);
  }
  return `M${top.join("L")}L${bottom.join("L")}Z`;
};
const SPECTRUM = [0, 1, 4, 2, 6, 3, 9, 5, 12, 2, 16, 6, 24, 8, 10, 30, 4, 18, 30, 10, 36, 12, 38, 44, 20, 42, 20, 24, 10, 22, 8, 18, 9, 22, 30, 8, 18, 26, 10, 34, 40, 18, 12, 38, 20, 8, 22, 36, 40, 22];

@customElement("live-devices")
export class LiveDevices extends LitElement {
  static styles = [base, css`
    :host { display: grid; grid-template-columns: minmax(0, 489fr) 6px minmax(0, 342fr) 5px minmax(0, 106fr); }
    .dev { height: 126px; background: #b2b2b2; border: 1px solid #c4c4c4; border-radius: 2px; display: flex; flex-direction: column; overflow: hidden; }
    .bar { height: 11px; display: flex; align-items: center; gap: 2px; padding: 0 2px 0 1px; background: #bdbdbd; flex: none; white-space: nowrap; }
    .bar .power { width: 9px; height: 9px; border-radius: 5px; background: var(--amber); border: 1px solid #8a6a20; flex: none; }
    .black { background: #222; color: #ddd; }
    .gran { display: grid; grid-template-columns: 21px minmax(0, 1fr); height: 60px; }
    .gl { display: grid; grid-template-rows: 24px 11px 1fr; align-items: center; border-right: 1px solid #ccc; }
    .gl > svg { justify-self: center; }
    .gl .auto { background: #ccc; height: 11px; padding: 1px; }
    .gl .btn { width: 18px; color: #1b1b1b; background: var(--amber); }
    .gr { display: flex; flex-direction: column; padding: 1px 0 0 2px; }
    .gr > svg { width: 100%; height: 46px; }
    .file { display: flex; align-items: center; gap: 3px; padding-right: 3px; height: 9px; white-space: nowrap; }
    .id { width: 28px; height: 9px; border: 1px solid var(--amber); color: var(--amber); }
    .t1 { margin: 0 10px 0 6px; color: #b8b8b8; }
    .t2 { color: #c8c8c8; }
    .all { width: 24px; height: 9px; border: 1px solid #999; border-radius: 5px; margin-right: 6px; color: #ccc; }
    .mods { display: grid; grid-template-columns: 42fr 39fr 55fr 46fr 46fr 45fr 43fr 110fr auto; height: 14px; border-top: 1px solid #ddd; align-items: center; padding: 0 2px; flex: none; white-space: nowrap; }
    .mods b { color: #3cc9dc; margin-left: 4px; font-weight: 600; }
    .mods .v b { color: var(--amber); }
    .pars { display: flex; flex: 1; padding-top: 2px; min-height: 0; }
    .pars .knob { width: 34px; flex: 1 1 34px; }
    .cloud { width: 36px; padding: 1px 2px; flex: none; }
    .cloud > svg { margin: 4px auto 0; }
    .knob svg { margin: -1px 0 -3px; }
    .grp { display: flex; padding: 0 2px; border-right: 1px solid #cacaca; flex: 4 1 136px; }
    .g1 { flex: 1 1 34px; } .g6 { flex: 6 1 204px; }
    .voices { width: 58px; padding: 0 2px; display: grid; grid-template-columns: 24px 1fr; gap: 3px 2px; align-content: start; text-align: center; flex: none; white-space: nowrap; }
    .voices .wide { grid-column: 1 / -1; }
    .voices .grey { background: #999; }
    .vu { padding: 27px 1px 0; }

    .echo { display: grid; grid-template-columns: 79px minmax(0, 1fr) 76px; flex: 1; }
    .tabs { display: flex; margin-left: 20px; align-items: flex-end; height: 11px; }
    .tabs button { height: 10px; padding: 0 5px; }
    .tabs .cur { background: #222; color: #e8e8e8; padding: 0 4px; }
    .pair { display: grid; grid-template-columns: minmax(0, 1fr) 10px minmax(0, 1fr); padding: 0 3px 0 2px; align-items: center; height: 11px; }
    .pair > i { justify-self: center; align-self: stretch; width: 1px; background: #8c8c8c; }
    .first { height: 41px; align-items: start; }
    .last { height: 34px; margin-top: 3px; align-items: start; }
    .pair .on { background: var(--amber); }
    .mid { display: flex; flex-direction: column; align-items: center; gap: 2px; padding-top: 8px; }
    .mid .btn { width: 10px; }
    .link { display: flex; align-items: center; justify-content: center; align-self: stretch; margin: 3px -2px 0; background: linear-gradient(#8c8c8c, #8c8c8c) center / 1px 100% no-repeat; }
    .link .btn { width: 13px; margin-bottom: 3px; }
    .ed { display: flex; flex-direction: column; }
    .ed > svg { width: 100%; height: 68px; flex: none; border-bottom: 1px solid #555; }
    .mat { display: grid; grid-template-columns: 9px 23px 43px 13px 24px 28px 1fr; grid-auto-rows: 12px; align-items: center; padding: 4px 0 0 7px; white-space: nowrap; }
    .mat b { font-weight: 600; color: var(--amber); }
    .mat .cy { color: #3cc9dc; }
    .chk { width: 6px; height: 6px; background: #2fd8ee; }
    .x4 { width: 12px; height: 8px; border: 1px solid var(--amber); color: var(--amber); font-size: 6px; line-height: 6px; }
    .env { border-left: 1px solid #555; padding-left: 7px; }
    .er { display: grid; grid-template-columns: 36px 1fr; column-gap: 1px; padding-left: 3px; grid-template-rows: 38px 39px 34px; }
    .er .stack { display: flex; flex-direction: column; gap: 2px; padding-top: 2px; }
    .er .stack.mid-stack { padding-top: 4px; }
    .stack .on { background: var(--amber); }
    .decay { background: linear-gradient(90deg, #19d0e6 33%, #e4e4e4 0); height: 9px; border: 1px solid #4c4c4c; text-align: center; width: 100%; }
    .er .caption { line-height: 9px; }
    .er .stack p { line-height: 8px; margin-bottom: -1px; }
    .eq { margin: 2px 0 0 2px; display: flex; flex-direction: column; height: 70px; }
    .eq > svg { width: 100%; height: 57px; flex: none; }
    .hz { display: grid; grid-template-columns: 16px 1fr 16px; padding-left: 2px; align-items: center; text-align: center; color: var(--amber); font-weight: 600; }
    .hz .btn { background: var(--amber); width: 15px; }
    .three { display: grid; grid-template-columns: repeat(3, minmax(0, 1fr)); padding: 2px 0 0 7px; }
    .three svg { margin: 0 0 -2px; }
  `];

  private vu() {
    return html`<div class="vu"><svg width="4" height="74"><path d="M0 0h1.500v74H0zM2.500 0H4v74H2.500z" fill="#222" /><path d="M0 38h4v7H0z" fill="#2a9c4c" /><path d="M0 45h4v29H0z" fill="#34e870" /><path d="M0 32h4v1H0z" fill="#999" /></svg></div>`;
  }

  render() {
    const plus = (t: string) => html`<svg width="9" height="9" viewBox="0 0 9 9"><circle cx="4.500" cy="4.500" r="4" fill="none" stroke=${t === "−" ? "#888" : "#b98a1a"} stroke-width=".8" /><text x="4.500" y="7" font-size="7" text-anchor="middle" fill=${t === "−" ? "#bbb" : "#ffb20f"}>${t}</text></svg>`;
    return html`
      <section class="dev">
        <div class="bar"><i class="power"></i><span class="grow">Granulator III</span><span>MPE</span>${ringIcon(gridDots)}${ringIcon(swap)}${ringIcon(save)}</div>
        <div class="gran black">
          <div class="gl"><svg width="8" height="9"><path d="M0 4h8v1H0zM2 2h1v5H2zM4 0h1v9H4zM6 2h1v5H6z" fill="#2bb7b7" /></svg>
            <div class="auto"><button class="btn">Auto</button></div>
            <svg width="9" height="9" viewBox="0 0 9 9" fill="none" stroke="#bbb"><path d="M2.500 1.800a3.500 3.500 0 1 0 4 0M4.500 0v4" /></svg></div>
          <div class="gr">
            <svg viewBox="0 0 463 46" preserveAspectRatio="none"><path d="M64 2h3v42h-3z" fill="#5e5e5e" /><path d=${wave()} fill="#ffb20f" /><path d="M184 8h1v32h-1zM187 5h2v37h-2zM190 4h1v39h-1z" fill="#2b9c95" /></svg>
            <div class="file"><button class="id">I/D</button><span class="t1">35 sec</span><span class="t2 grow">Guitar Drone Bowed G.aif</span>${plus("+")}${plus("−")}<button class="all">ALL</button>${plus("?")}</div>
          </div>
        </div>
        <div class="mods black">${[["Key", "0"], ["Vel", "0"], ["Note PB", "0"], ["Slide", "0"], ["Press", "0"], ["Env2", "0"], ["LFO", "52"], ["Rand", "0"]].map(([a, b]) => html`<span>${a}<b>${b}</b></span>`)}
          <span class="v">Variation<b>6.08 ms</b></span></div>
        <div class="pars">
          <div class="cloud">${pick("Mode", "Cloud")}<svg width="16" height="16" viewBox="0 0 16 16" fill="none" stroke="#1b1b1b" stroke-width=".9"><path d="M5 3a3.500 3 0 0 1 6 0M0 7c1.500 0 2-2.500 4-2.500S6.500 7 8 7s2-2.500 4-2.500S14.500 7 16 7M0 11c1.500 0 2-2.500 4-2.500S6.500 11 8 11s2-2.500 4-2.500 2.500 2.500 4 2.500M2 15c1-1.500 4-1.500 5 0M9 15c1-1.500 4-1.500 5 0" /></svg></div>
          <div class="grp">${knob("Position", 0.26, "13.7 %")}${knob("Scan", 0, "0.00 x")}${knob("Grain Size", 0.5, "250 ms")}${knob("Shape", 0.68, "68", { ring: "#f4f4f4", base: "#666" })}</div>
          <div class="grp g1">${knob("Variation", 0.36, "13.1 %")}</div>
          <div class="grp g6">${knob("Transpose", 0.36, "-7 st")}${knob("Spread", 0.22, "0.01 st")}${knob("LFO Freq", 0.22, "0.05 Hz")}${knob("LFO Amt", 1, "100 %")}${knob("Flt Freq", 0.88, "12.5 kHz")}${knob("Volume", 0.88, "0.0 dB")}</div>
          <div class="voices"><span>Voices</span><span>2 / 8</span><button class="btn">Mono</button><button class="btn grey">1.00 ms</button><button class="btn wide">Hold</button></div>
        </div>
      </section>
      ${this.vu()}
      <section class="dev">
        <div class="bar"><i class="power"></i><span>Diffused Long Cascades</span>
          <div class="tabs grow"><button>Echo</button><button class="cur">Modulation</button><button>Character</button></div>${ringIcon(swap)}${ringIcon(save)}</div>
        <div class="echo">
          <div class="el">
            <div class="pair first">${knob("Left", 0.72, "1/4")}<div class="link"><button class="btn" aria-label="Link channels"><svg width="9" height="5" viewBox="0 0 9 5" fill="none" stroke="#1b1b1b"><path d="M3.500 1H2a1.500 1.500 0 0 0 0 3h1.500M5.500 1H7a1.500 1.500 0 0 1 0 3H5.500M3 2.500h3" /></svg></button></div>${knob("Right", 0.5, "1/8")}</div>
            <div class="pair"><button class="btn on">Sync</button><i></i><button class="btn on">Sync</button></div>
            <div class="pair">${pick("Left mode", "Notes")}<i></i>${pick("Right mode", "Notes")}</div>
            <div class="pair"><input class="field" value="0.0 %" aria-label="Left offset" /><i></i><input class="field" value="1.0 %" aria-label="Right offset" /></div>
            <div class="pair last">${knob("Input", 0.68, "11 dB")}<div class="mid"><button class="btn on">D</button><button class="btn on">Ø</button></div>${knob("Feedback", 0.38, "61 %")}</div>
          </div>
          <div class="ed black">
            <svg viewBox="0 0 186 67" preserveAspectRatio="none" fill="none" stroke-width="1.500">
              <path d="M0 43.500h32V17h32v14.500h31.500V41h32V26h31.500V14H186" stroke="#f0a60e" /><path d="M0 39h32V22h32v22h31.500v-3.500h32V23h31.500v-4.500H186" stroke="#19d0e6" />
              <g stroke="#aaa" stroke-width=".9"><path d="M54 59c3-7 4-7 5-2s3 4 5-2M67 61l5-5 5 5M80 61h2l8-5v5M95 61v-5l8 5M107 61v-5h5v5h5v-5" /><path d="M121 61l3-3v3l3-4 4-2" stroke="#ffb20f" /></g>
            </svg>
            <div class="mat">
              <input class="chk" type="checkbox" checked aria-label="Sync" /><span>Sync</span><i></i><i></i><span>Mod</span><span>Mod</span><span class="env">Env</span>
              <i></i><span>Rate</span><b class="cy">1/8</b><button class="x4">x4</button><b>16 %</b><b>88 %</b><b class="cy env">0.0 %</b>
              <i></i><span>Phase</span><b class="cy">53°</b><i></i><span>Delay</span><span>Filter</span><span class="env">Mix</span>
            </div>
          </div>
          <div class="er">
            ${knob("Reverb", 0.85, "83 %")}${knob("Stereo", 0.3, "60 %")}
            <div class="stack mid-stack">${pick("Reverb position", "Feedbk")}<p>Decay</p><input class="decay" value="34 %" aria-label="Decay" /></div>${knob("Output", 0.36, "-7.0 dB")}
            <div class="stack"><button class="btn on">Stereo</button><button class="btn">Ping Pong</button><button class="btn">Mid/Side</button></div>${knob("Dry/Wet", 0.62, "62 %")}
          </div>
        </div>
      </section>
      ${this.vu()}
      <section class="dev">
        <div class="bar"><i class="power"></i><span>Channel EQ</span></div>
        <div class="eq black">
          <svg viewBox="0 0 103 57" preserveAspectRatio="none" fill="none">
            <path d="M0 8h103M0 28h103M36 0v57M92 0v57" stroke="#3e3e3e" stroke-width=".8" />
            <path d="M28 55${SPECTRUM.map((h, i) => `L${28 + i * 1.5} ${55 - h * 0.55}`).join("")}L103 55z" fill="#6c6c6c" />
            <path d="M28 55C50 44 55 34 75 29C85 26 95 25.500 103 25.500" stroke="#19d0e6" stroke-width="1.500" />
            <g font-size="6" fill="#aaa"><text x="6" y="8">12</text><text x="10" y="30">0</text><text x="2" y="52">-12</text><text x="32" y="54">100</text><text x="86" y="54">1k</text></g>
          </svg>
          <div class="hz"><button class="btn" aria-label="High pass"><svg width="11" height="6" viewBox="0 0 11 6" fill="none" stroke="#1b1b1b"><path d="M0 6c2-5 5-5 11-5" /></svg></button><span>1.50 kHz</span></div>
        </div>
        <div class="three">${knob("Low", 0.22, "-12 dB")}${knob("Mid", 0.55, "1.1 dB")}${knob("High", 0.5, "0.0 dB", { pan: true })}</div>
      </section>`;
  }
}

/* ---------- shell ---------- */
@customElement("app-root")
export class AppRoot extends LitElement {
  static styles = [base, css`
    :host { display: flex; flex-direction: column; justify-content: center; min-height: 100vh; background: #fff; }
    main { background: var(--desk); padding-bottom: 5px; }
    .upper { display: grid; grid-template-columns: minmax(0, 279fr) minmax(0, 663fr); gap: 6px; padding: 0 6px; }
    live-clip { padding: 5px 6px 0; }
    live-devices { padding: 6px 6px 0; }
    footer { display: flex; align-items: center; height: 13px; margin: 6px 7px 0; }
    .help { flex: 1; height: 12px; background: #9e9e9e; margin: 0 6px 0 11px; }
    .up { width: 13px; height: 13px; background: var(--amber); }
    .over { width: 132px; height: 13px; border: 1px solid #111; border-radius: 2px; background: #dadada; margin: 0 6px 0 2px; flex: none; }
    .name { margin: 0 4px; white-space: nowrap; }
    .chain { display: flex; align-items: center; height: 13px; border: 1px solid #222; border-radius: 3px; padding: 0 1px; gap: 2px; }
    .end { margin-left: 12px; display: flex; align-items: center; gap: 4px; }
  `];

  render() {
    const up = html`<svg width="7" height="5"><path d="M0 5h7L3.500 0z" /></svg>`;
    return html`<main>
      <live-transport></live-transport>
      <div class="upper"><live-browser></live-browser><live-session></live-session></div>
      <live-clip></live-clip>
      <live-devices></live-devices>
      <footer>
        <svg width="10" height="10"><circle cx="5" cy="5" r="5" fill="#b0b0b0" /><path d="M4 4h2v4H4zM4 2h2v1H4z" fill="#777" /></svg>
        <div class="help"></div>
        <button class="up" aria-label="Show clip">${up}</button>
        <div class="over"><svg width="130" height="11"><path d="M2 2h15v1H2zM18 10h25v1H18zM50 2h12v1H50zM66 6h11v1H66zM83 10h20v1H83zM105 6h16v1h-16zM28 0h1v11h-1z" /></svg></div>
        <button class="up" aria-label="Show devices">${up}</button>
        <span class="name">Drone Pad</span>
        <button class="chain">Granulator III<svg width="40" height="11"><path d="M0 0h1v11H0z" fill="#444" /><path d="M5 0h8v11H5z" fill="#777" /><path d="M9 0h19v11H9z" fill="#333" /><path d="M11 1h15v9H11z" fill="#000" /><path d="M29 1h10v9H29z" fill="#8a8a8a" /><path d="M30 1h9v3h-9z" fill="#333" /></svg></button>
        <svg width="12" height="10"><path d="M0 0h12v5H0z" fill="#222" /><path d="M1 6h3v4H1zM5 6h6v4H5z" fill="#777" /></svg>
        <div class="end"><svg width="10" height="10"><path d="M0 3h1.500v7H0zM2.800 0h1.500v10H2.800zM5.600 2h1.500v8H5.600zM8.400 4h1.500v6H8.400z" fill="#ffb20f" /></svg>${down("#aaa")}</div>
      </footer>
    </main>`;
  }
}
